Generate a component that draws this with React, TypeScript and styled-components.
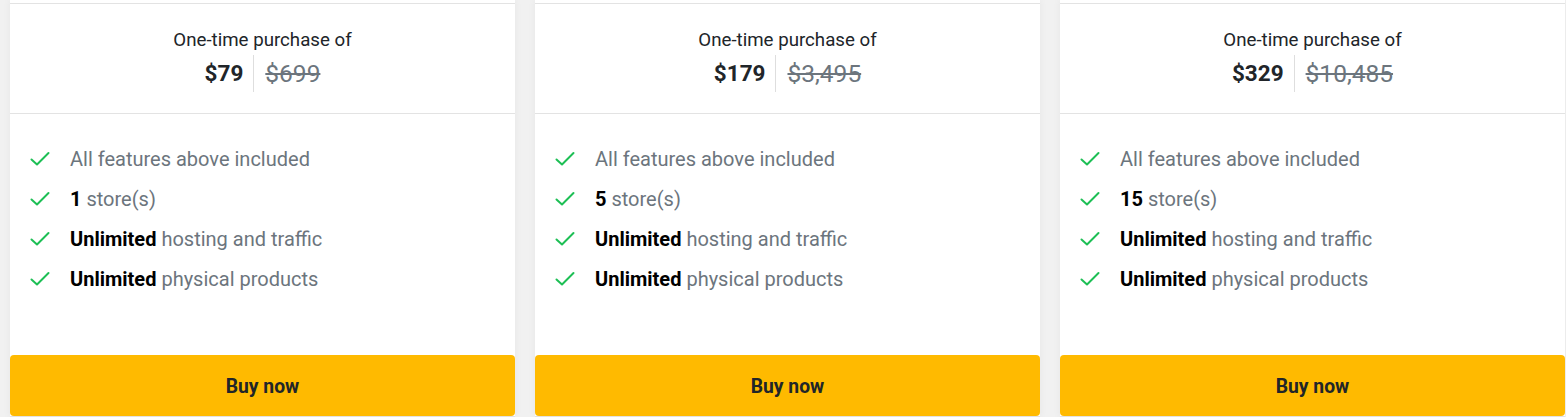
import React from "react";
import styled, { createGlobalStyle } from "styled-components";

const Global = createGlobalStyle`
  html, body { margin: 0; padding: 0; background: #f1f1f1; }
  body { font-family: Roboto, "Liberation Sans", Arial, sans-serif; }
`;

const Page = styled.div`
  display: grid;
  grid-template-columns: repeat(3, 505px);
  column-gap: 20px;
  padding-left: 10px;
  height: 417px;
  overflow: hidden;
`;

const Card = styled.div`
  background: #fff;
  display: flex;
  flex-direction: column;
  height: 416px;
  border-bottom: 1px solid #e2e2e2;
  box-shadow: 0 0 8px rgba(0, 0, 0, 0.05);
`;

const TopCut = styled.div`
  height: 3px;
  border-bottom: 1px solid #e3e3e3;
`;

const PriceBlock = styled.div`
  height: 110px;
  border-bottom: 1px solid #e3e3e3;
  display: flex;
  flex-direction: column;
  align-items: center;
  padding-top: 24px;
  box-sizing: border-box;
`;

const Label = styled.div`
  font-size: 18.7px;
  color: #212529;
  line-height: 24px;
`;

const PriceRow = styled.div`
  display: flex;
  align-items: center;
  margin-top: 3px;
`;

const Current = styled.span`
  font-size: 22.5px;
  font-weight: 700;
  color: #212529;
  padding-right: 10px;
  line-height: 37px;
`;

const Divider = styled.span`
  width: 1px;
  height: 37px;
  background: #dedede;
`;

const Old = styled.span`
  font-size: 24.5px;
  color: #6c757d;
  text-decoration: line-through;
  padding-left: 11px;
  line-height: 37px;
`;

const Features = styled.ul`
  list-style: none;
  margin: 0;
  padding: 33px 0 0 20px;
  display: flex;
  flex-direction: column;
  gap: 16px;
  flex: 1;
`;

const Item = styled.li`
  display: flex;
  align-items: center;
  gap: 20px;
  font-size: 20px;
  line-height: 24px;
  color: #6c757d;
  b {
    color: #000;
    font-weight: 700;
  }
`;

const Check = styled.svg`
  width: 20px;
  height: 20px;
  flex: none;
`;

const BuyButton = styled.button`
  height: 61px;
  width: 100%;
  border: none;
  border-radius: 4px;
  background: #ffba00;
  color: #212529;
  font-family: inherit;
  font-size: 19.3px;
  font-weight: 700;
  padding: 2px 0 0;
  cursor: pointer;
`;

const CheckIcon = () => (
  <Check viewBox="0 0 20 20" fill="none">
    <path d="M1.5 10.5 L7 15.5 L18.5 4" stroke="#1dbf55" strokeWidth="2" strokeLinecap="round" strokeLinejoin="round" />
  </Check>
);

const plans = [
  { price: "$79", old: "$699", stores: "1" },
  { price: "$179", old: "$3,495", stores: "5" },
  { price: "$329", old: "$10,485", stores: "15" },
];

export default function App() {
  return (
    <>
      <Global />
      <Page>
        {plans.map((p) => (
          <Card key={p.price}>
            <TopCut />
            <PriceBlock>
              <Label>One-time purchase of</Label>
              <PriceRow>
                <Current>{p.price}</Current>
                <Divider />
                <Old>{p.old}</Old>
              </PriceRow>
            </PriceBlock>
            <Features>
              <Item><CheckIcon />All features above included</Item>
              <Item><CheckIcon /><span><b>{p.stores}</b> store(s)</span></Item>
              <Item><CheckIcon /><span><b>Unlimited</b> hosting and traffic</span></Item>
              <Item><CheckIcon /><span><b>Unlimited</b> physical products</span></Item>
            </Features>
            <BuyButton>Buy now</BuyButton>
          </Card>
        ))}
      </Page>
    </>
  );
}
